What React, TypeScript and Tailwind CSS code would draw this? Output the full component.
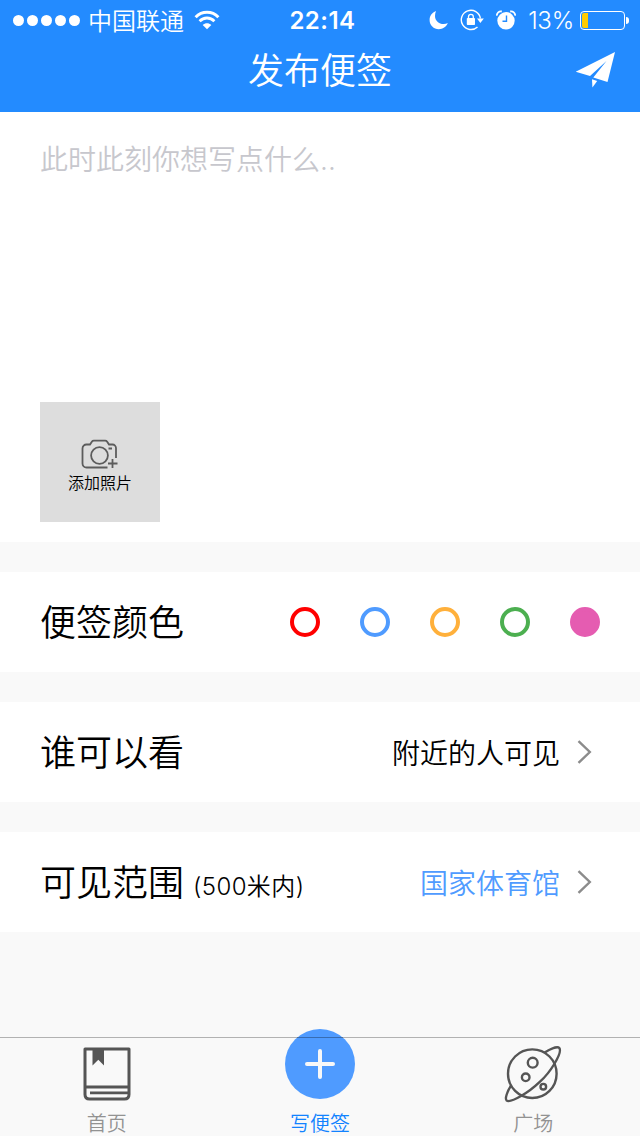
import { useState } from 'react';
import type { ReactNode } from 'react';
import { clsx } from 'clsx';

const COLORS = [
  { id: 'red', ring: 'border-[#ff0000]', fill: 'bg-[#ff0000]' },
  { id: 'blue', ring: 'border-[#4f9bff]', fill: 'bg-[#4f9bff]' },
  { id: 'orange', ring: 'border-[#ffb03b]', fill: 'bg-[#ffb03b]' },
  { id: 'green', ring: 'border-[#4caf50]', fill: 'bg-[#4caf50]' },
  { id: 'pink', ring: 'border-[#e55cb1]', fill: 'bg-[#e55cb1]' },
] as const;

function StatusBar() {
  return (
    <div className="flex h-10 items-center pl-[13px] pr-[11px]">
      <div className="flex flex-1 items-center">
        <div className="flex gap-[3px]">
          {[0, 1, 2, 3, 4].map((i) => (
            <span key={i} className="size-[11px] rounded-full bg-white" />
          ))}
        </div>
        <span className="ml-[8px] pt-[3px] text-[24px] font-[350] leading-10">中国联通</span>
        <svg width="26" height="20" viewBox="0 0 26 20" className="ml-[10px]" fill="none" stroke="#fff">
          <path d="M1.6 7.2C8 .6 18 .6 24.4 7.2" strokeWidth="3" />
          <path d="M5.6 11.2c4.2-4.3 10.6-4.3 14.8 0" strokeWidth="2.8" />
          <path d="M13 19.3l-4.3-4.4c2.5-2.3 6.1-2.3 8.6 0z" fill="#fff" stroke="none" />
        </svg>
      </div>
      <span className="pl-[3px] pt-[2px] text-[24px] font-semibold leading-10 tracking-[0.5px]">22:14</span>
      <div className="flex flex-1 items-center justify-end">
        <svg width="20" height="20" viewBox="0 0 20 20" fill="#fff">
          <path d="M7 1C3 2.5.6 6 .6 10c0 5.2 4.1 9.2 9.2 9.2 4 0 7.3-2.2 9-6.2-1.2.7-2.6 1.1-4.1 1.1C9.8 14.1 6 10.6 6 6c0-1.8.3-3.5 1-5z" />
        </svg>
        <svg width="24" height="22" viewBox="0 0 24 22" className="ml-[11px]" fill="none" stroke="#fff">
          <path d="M20.4 9.5A9.6 9.6 0 1 0 17.5 17.9" strokeWidth="1.4" />
          <path d="M17 9.6h6.8L20.4 14z" fill="#fff" stroke="none" />
          <rect x="6.8" y="9" width="8.2" height="7" rx=".8" fill="#fff" stroke="none" />
          <path d="M8.5 9.5V7.7a2.4 2.4 0 0 1 4.8 0v1.8" strokeWidth="1.3" />
        </svg>
        <svg width="20" height="20" viewBox="0 0 20 20" className="ml-[12px]">
          <circle cx="10" cy="10.8" r="8.7" fill="#fff" />
          <path d="M10.5 5.5v5.8H6.5" fill="none" stroke="#238bff" strokeWidth="1.4" />
          <path d="M.9 5.6C.7 3 3 .9 5.8 1.5M19.1 5.6C19.3 3 17 .9 14.2 1.5" fill="none" stroke="#fff" strokeWidth="1.8" />
        </svg>
        <span className="ml-3 pt-[2px] text-[24px] font-[350] leading-10 tracking-[-0.2px]">13%</span>
        <div className="ml-[6px] mt-px flex h-[19px] w-[45px] rounded-[4px] border border-white p-[1px]">
          <span className="h-full w-[6px] rounded-l-[2px] bg-[#ffcc00]" />
        </div>
        <span className="ml-px mt-px h-[7px] w-[3px] rounded-r-full bg-white" />
      </div>
    </div>
  );
}

function Header() {
  return (
    <header className="h-28 bg-[#238bff] text-white">
      <StatusBar />
      <div className="grid h-[62px] grid-cols-[1fr_auto_1fr] items-center">
        <h1 className="col-start-2 text-[36px] font-[350] leading-[62px]">发布便签</h1>
        <button className="mb-0.5 mr-6 justify-self-end" aria-label="发布">
          <svg width="41" height="38" viewBox="0 0 41 38" fill="#fff">
            <path d="M40 1L.7 20.7 15 25 31.500 10 18.300 26.500 32.500 31z" />
            <path d="M17 28.3l5.200 1.600-4.800 6.600z" />
          </svg>
        </button>
      </div>
    </header>
  );
}

function Row({ children }: { children: ReactNode }) {
  return (
    <section className="mt-[30px] flex h-[100px] items-center justify-between bg-white px-10">
      {children}
    </section>
  );
}

function Chevron() {
  return (
    <svg width="15" height="24" viewBox="0 0 15 24" fill="none" className="ml-[17px] mr-2">
      <path d="M1.5 1.2L12.8 12 1.5 22.8" stroke="#8c8c8c" strokeWidth="2.4" />
    </svg>
  );
}

function PhotoButton() {
  return (
    <button className="flex size-[120px] flex-col items-center bg-[#dddddd] pt-[37px]">
      <svg width="38" height="30" viewBox="0 0 38 30" fill="none" stroke="#5c5c5c" strokeWidth="1.8">
        <path d="M26.5 28.5H5.500a4 4 0 0 1-4-4V9.500a4 4 0 0 1 4-4H9L11 2.500q.6-.9 1.800-.9h11.400q1.200 0 1.800.9l2 3h3.500a3.500 3.500 0 0 1 3.500 3.500v10" />
        <circle cx="18.5" cy="16.5" r="8.4" />
        <path d="M27.5 9.500h3.500M31.500 20v9M27 24.500h9.500" />
      </svg>
      <span className="pt-px text-[16px] font-[350] leading-[26px] text-black">添加照片</span>
    </button>
  );
}

function BookIcon() {
  return (
    <svg width="48" height="54" viewBox="0 0 48 54" fill="none" stroke="#555" strokeWidth="3">
      <path d="M2 2h44v45.500q0 4.500-4.500 4.500H6.500Q2 52 2 47.500zM2 40h44" strokeLinejoin="round" />
      <path d="M7 45.800h39" strokeWidth="2.8" />
      <path d="M9.500 2H21v16.500l-5.700-5.700-5.800 5.700z" fill="#555" stroke="none" />
    </svg>
  );
}

function PlanetIcon() {
  return (
    <svg width="60" height="60" viewBox="0 0 60 60" fill="none" stroke="#555" strokeWidth="2.4">
      <circle cx="29.3" cy="29.7" r="24.3" />
      <circle cx="29.7" cy="18.7" r="4.9" />
      <circle cx="22.7" cy="33.3" r="3.8" />
      <circle cx="40.3" cy="42.7" r="2.8" />
      <path d="M41.3 8.700C47 5.200 54.500 1.800 56.300 4 58 6.200 55.500 13 51.300 20 47.500 26.300 42.500 32.700 37 37.700 31.500 43 25 48.200 18 52 12 55.500 5.500 58.200 3.500 56.300 1.800 54.500 4.200 47.500 8 41.700" />
    </svg>
  );
}

function TabBar() {
  return (
    <nav className="grid h-[99px] grid-cols-3 border-t border-[#b2b2b2] text-[20px] font-[350] leading-6 text-[#929292]">
      <a className="flex flex-col items-center pt-[9px]">
        <BookIcon />
        <span className="mt-[11px]">首页</span>
      </a>
      <a className="relative flex flex-col items-center text-[#1283ff]">
        <span className="-mt-[9px] flex size-[70px] items-center justify-center rounded-full bg-[#4f9bff]">
          <svg width="32" height="32" viewBox="0 0 32 32" stroke="#f8f8f8" strokeWidth="4" strokeLinecap="round">
            <path d="M16 3v26M3 16h26" />
          </svg>
        </span>
        {/* the bar's hairline stays visible across the raised button */}
        <span className="absolute -top-px left-1/2 h-px w-[46px] -translate-x-1/2 bg-black/30" />
        <span className="mt-[13px]">写便签</span>
      </a>
      <a className="flex flex-col items-center pt-[6px]">
        <PlanetIcon />
        <span className="mt-[8px]">广场</span>
      </a>
    </nav>
  );
}

export default function App() {
  const [color, setColor] = useState('pink');

  return (
    <div className="flex h-[1136px] w-[640px] flex-col bg-[#f9f9f9] font-['Inter','Noto_Sans_CJK_SC',sans-serif] text-black">
      <Header />
      <main className="flex-1">
        <section className="flex h-[430px] flex-col justify-between bg-white px-10 pb-5 pt-[28px]">
          <p className="text-[28px] font-[350] leading-10 text-[#c7c7cd]">此时此刻你想写点什么..</p>
          <PhotoButton />
        </section>

        <Row>
          <h2 className="pt-0.5 text-[36px] font-[350] leading-none">便签颜色</h2>
          <div className="flex gap-10">
            {COLORS.map((c) => (
              <button
                key={c.id}
                aria-label={c.id}
                onClick={() => setColor(c.id)}
                className={clsx('size-[30px] rounded-full border-4', c.ring, color === c.id && c.fill)}
              />
            ))}
          </div>
        </Row>

        <Row>
          <h2 className="pt-0.5 text-[36px] font-[350] leading-none">谁可以看</h2>
          <div className="flex items-center text-[28px] font-[350] leading-none">
            <span className="pt-[3px]">附近的人可见</span>
            <Chevron />
          </div>
        </Row>

        <Row>
          <h2 className="pt-0.5 text-[36px] font-[350] leading-none">
            可见范围
            <span className="ml-[9px] align-[1px] text-[24px] leading-none tracking-[0.4px]">(500米内)</span>
          </h2>
          <div className="flex items-center text-[28px] font-[350] leading-none text-[#4f9bff]">
            <span className="pt-[3px]">国家体育馆</span>
            <Chevron />
          </div>
        </Row>
      </main>
      <TabBar />
    </div>
  );
}
